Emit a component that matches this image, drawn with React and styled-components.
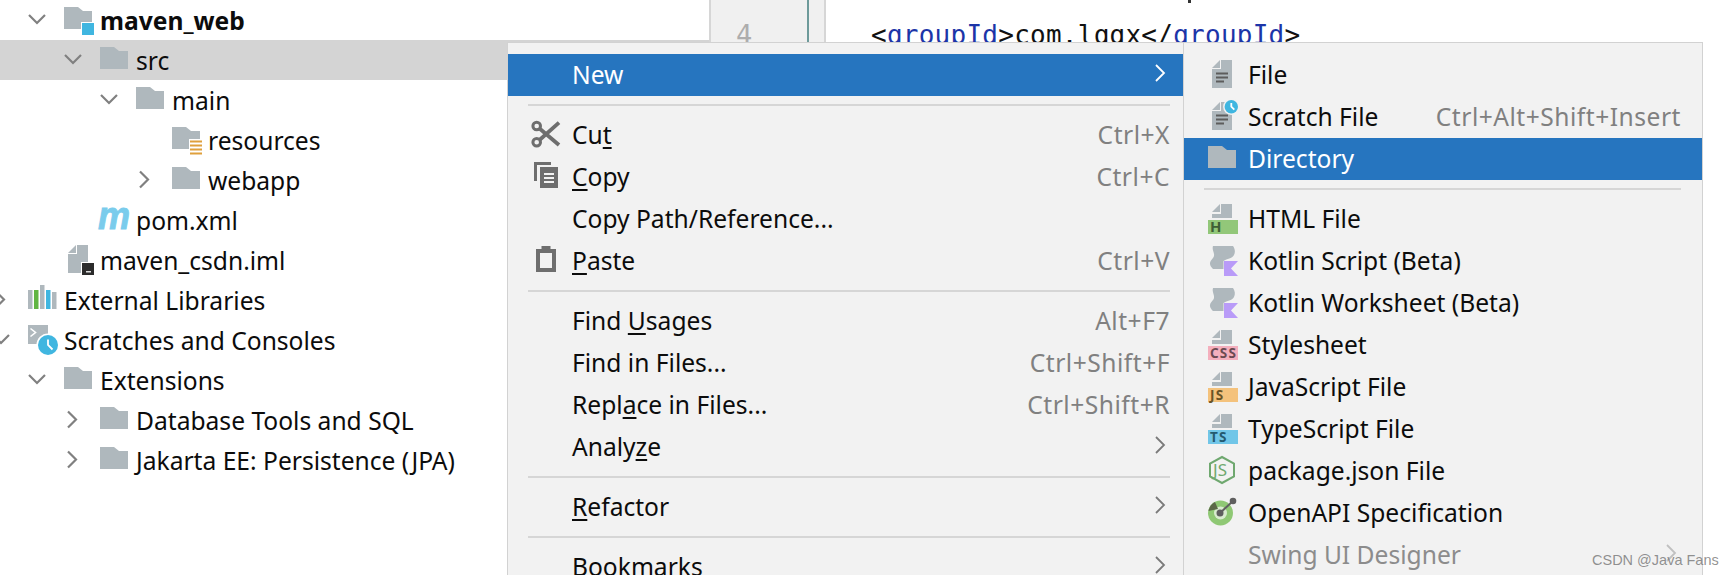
import React from 'react';
import styled, { createGlobalStyle } from 'styled-components';

const GRAY = '#afb8bd';
const UI_FONT = '"Noto Sans", "Open Sans", sans-serif';

const GlobalStyle = createGlobalStyle`
  html, body { margin: 0; padding: 0; background: #fff; }
  body { font-family: ${UI_FONT}; color: #0c0c0c; }
`;

const Page = styled.div`
  position: relative;
  display: flex;
  width: 1726px;
  height: 575px;
  overflow: hidden;
  background: #fff;
`;

/* project tree */
const Tree = styled.div`
  width: 709px;
  flex: none;
  overflow: hidden;
`;

const TreeRow = styled.div`
  display: flex;
  align-items: center;
  height: 40px;
  background: ${p => (p.$selected ? '#d4d4d4' : 'transparent')};
  font-size: 24.6px;
  font-weight: ${p => (p.$bold ? 700 : 400)};
  white-space: nowrap;
`;

const ChevronSlot = styled.div`
  width: 36px;
  height: 18px;
  flex: none;
  margin-left: ${p => p.$depth * 36 - 8}px;
`;

const IconSlot = styled.div`
  width: 36px;
  height: 30px;
  flex: none;
`;

const Svg = styled.svg`
  display: block;
  overflow: visible;
`;

/* editor behind the menu */
const Gutter = styled.div`
  position: relative;
  width: 117px;
  flex: none;
  box-sizing: border-box;
  background: #f0f0f0;
  border-left: 2px solid #d6d6d6;
  border-right: 2px solid #d6d6d6;
  padding: 18px 0 0 25px;
  font: 27px/34px "DejaVu Sans Mono", monospace;
  color: #adadad;
`;

const ChangeBar = styled.div`
  position: absolute;
  top: 0;
  bottom: 0;
  left: 96px;
  width: 2px;
  background: #6d9a9a;
`;

const Editor = styled.div`
  flex: 1;
  padding: 18px 0 0 45px;
  font: 26px/34px "DejaVu Sans Mono", monospace;
  letter-spacing: 0.25px;
  color: #111;
  white-space: pre;
`;

const Tag = styled.span`
  color: #1c35a8;
`;

const StrayTick = styled.div`
  position: absolute;
  top: 0;
  left: 1188px;
  width: 3px;
  height: 3px;
  background: #333;
`;

/* popup menus */
const Menu = styled.div`
  --start: ${p => p.$start}px;
  --end: ${p => p.$end}px;
  --slot: ${p => p.$slot}px;
  position: absolute;
  top: 42px;
  left: ${p => p.$left}px;
  width: ${p => p.$width}px;
  height: 560px;
  box-sizing: border-box;
  padding-top: 11px;
  background: #f2f2f2;
  border: 1px solid #d2d2d2;
  font-size: 24.6px;
`;

const Item = styled.div`
  display: flex;
  align-items: center;
  box-sizing: border-box;
  height: 42px;
  padding: 0 var(--end) 1px var(--start);
  background: ${p => (p.$active ? '#2675bf' : 'transparent')};
  color: ${p => (p.$active ? '#fff' : p.$disabled ? '#8c8c8c' : '#0c0c0c')};
  white-space: nowrap;
`;

const ItemIcon = styled.div`
  width: var(--slot);
  height: 30px;
  margin-top: 1px;
  flex: none;
`;

const Label = styled.span`
  flex: 1;
`;

const Mnemonic = styled.span`
  text-decoration: underline;
  text-decoration-thickness: 2px;
  text-underline-offset: 3px;
`;

const Shortcut = styled.span`
  color: #808080;
  letter-spacing: 0.5px;
`;

const ArrowBox = styled.span`
  display: block;
  margin: 0 4px 3px 0;
  color: ${p => (p.$active ? '#fff' : p.$disabled ? '#c0c0c0' : '#7a7a7a')};
`;

const Separator = styled.div`
  height: 2px;
  margin: 8px var(--end) 8px 20px;
  background: #d6d6d6;
`;

const Watermark = styled.div`
  position: absolute;
  left: 1592px;
  top: 550px;
  font: 14.5px/20px "Liberation Sans", sans-serif;
  color: rgba(110, 110, 110, 0.75);
  white-space: nowrap;
`;

/* small drawings */
const Chevron = ({ open }) => (
  <Svg width="18" height="18" viewBox="0 0 18 18" fill="none" stroke="#808080" strokeWidth="2.2">
    <path d={open ? 'M1 4l8 8 8-8' : 'M4 0.5l8 8-8 8'} />
  </Svg>
);

const Arrow = () => (
  <Svg width="12" height="18" viewBox="0 0 12 18" fill="none" stroke="currentColor" strokeWidth="1.8">
    <path d="M2 1l8 8-8 8" />
  </Svg>
);

const Icon = ({ children }) => (
  <Svg width="30" height="30" viewBox="0 0 30 30">{children}</Svg>
);

const FOLDER = 'M0 2h14l5 4h9v18H0z';
const FOLDER_CUT = 'M0 2h14l5 4h9v11H17v7H0z';
const FILE_TOP = 'M9 0h11v14H0v-4h9z';
const FILE_FULL = 'M9 0h11v28H0V9h9z';

const FileLines = () => (
  <path d="M8 12.5h12v2H8zM8 16.5h12v2H8zM8 20.5h8v2H8z" fill="#5d5d5d" />
);

const Badge = ({ color, ink, text, size = 13.5 }) => (
  <>
    <path d={FILE_TOP} fill={GRAY} transform="translate(4 0)" />
    <path d="M4 8l8-8v8z" fill={GRAY} />
    <rect x="0" y="16" width="30" height="14" fill={color} />
    <text x="2" y="28" fontFamily="'Noto Sans', sans-serif" fontWeight="700" fontSize={size} letterSpacing="1.2" fill={ink}>
      {text}
    </text>
  </>
);

const KotlinIcon = () => (
  <Icon>
    <path d="M5 0H25C27 3 27.500 6 26 9C24 13 19 12.500 15.500 15V23H5C2 20 1 17.500 3 14.500C5 12 6.500 11 6 8C5.500 5 4 3 5 0z" fill={GRAY} />
    <path d="M16 15h14l-7 7.500 7 7.500H16z" fill="#b99bf8" />
  </Icon>
);

const ClockBadge = ({ cx, cy, r, ring }) => (
  <>
    <circle cx={cx} cy={cy} r={r + 1.5} fill={ring} />
    <circle cx={cx} cy={cy} r={r} fill="#40b6e0" />
    <path d={`M${cx} ${cy - r * 0.55}V${cy}l${r * 0.45} ${r * 0.45}`} fill="none" stroke="#fff" strokeWidth="1.800" />
  </>
);

const icons = {
  folder: <Icon><path d={FOLDER} fill={GRAY} /></Icon>,
  module: (
    <Icon>
      <path d={FOLDER_CUT} fill={GRAY} />
      <rect x="18" y="18" width="12" height="12" fill="#40b6e0" />
    </Icon>
  ),
  resources: (
    <Icon>
      <path d="M0 2h14l5 4h9v8H17v10H0z" fill={GRAY} />
      <path d="M18 15.500h12v2H18zM18 19.500h12v2H18zM18 23.500h12v2H18zM18 27.500h12v2H18z" fill="#dfa03c" />
    </Icon>
  ),
  maven: (
    <Icon>
      <text x="-2" y="24" fontFamily="'Liberation Sans', sans-serif" fontStyle="italic" fontWeight="700" fontSize="38" textLength="32" lengthAdjust="spacingAndGlyphs" fill="#7accec" stroke="#7accec" strokeWidth="0.9">
        m
      </text>
    </Icon>
  ),
  iml: (
    <Icon>
      <path d="M4 8l8-8v8z" fill={GRAY} />
      <path d="M13 0h11v17H17v11H4V9h9z" fill={GRAY} />
      <rect x="18" y="18" width="12" height="12" fill="#2b2b2b" />
      <rect x="22" y="26" width="5" height="1.500" fill="#ddd" />
    </Icon>
  ),
  libraries: (
    <Icon>
      <rect x="0" y="5" width="4.500" height="19" fill={GRAY} />
      <rect x="6" y="5" width="4.500" height="19" fill="#62b543" />
      <rect x="12" y="0" width="4.500" height="24" fill={GRAY} />
      <rect x="18" y="5" width="4.500" height="19" fill="#40b6e0" />
      <rect x="24" y="7" width="4.500" height="17" fill={GRAY} />
    </Icon>
  ),
  scratches: (
    <Icon>
      <rect x="0" y="0" width="20" height="19" fill={GRAY} />
      <path d="M2.500 3.500l5 4-5 4" fill="none" stroke="#fff" strokeWidth="1.600" />
      <ClockBadge cx={20} cy={20} r={10} ring="#fff" />
    </Icon>
  ),
  scissors: (
    <Icon>
      <g fill="none" stroke="#6e6e6e">
        <circle cx="5.700" cy="6" r="3.800" strokeWidth="3" />
        <circle cx="5.700" cy="22.300" r="3.800" strokeWidth="3" />
        <path d="M8.500 8.500L28 25M8.500 20L28 2.700" strokeWidth="3.800" />
      </g>
    </Icon>
  ),
  copy: (
    <Icon>
      <path d="M3 0h17v3H6v16H3z" fill="#6e6e6e" />
      <path d="M9 5h18v21H9z" fill="#6e6e6e" />
      <path d="M13 11h10v2H13zM13 15h10v2H13zM13 19h10v2H13z" fill="#f2f2f2" />
    </Icon>
  ),
  paste: (
    <Icon>
      <path d="M5 3h5.500V0h9v3H25v23H5zM9 7v15h12V7z" fill="#6e6e6e" fillRule="evenodd" />
    </Icon>
  ),
  file: (
    <Icon>
      <path d="M4 8l8-8v8z" fill={GRAY} />
      <path d={FILE_FULL} fill={GRAY} transform="translate(4 0)" />
      <FileLines />
    </Icon>
  ),
  scratchFile: (
    <Icon>
      <path d="M4 8l8-8v8z" fill={GRAY} />
      <path d={FILE_FULL} fill={GRAY} transform="translate(4 0)" />
      <FileLines />
      <ClockBadge cx={23.300} cy={4.700} r={6.700} ring="#f2f2f2" />
    </Icon>
  ),
  html: <Icon><Badge color="#92c779" ink="#3e5f36" text="H" size={15} /></Icon>,
  kotlin: <KotlinIcon />,
  css: <Icon><Badge color="#f4afbd" ink="#6b4a52" text="CSS" /></Icon>,
  js: <Icon><Badge color="#f4c27c" ink="#6a5426" text="JS" /></Icon>,
  ts: <Icon><Badge color="#71c6e8" ink="#245a70" text="TS" /></Icon>,
  packageJson: (
    <Icon>
      <path d="M14 1l12 6.500v13L14 27 2 20.500v-13z" fill="none" stroke="#6fa86f" strokeWidth="2" />
      <text x="5" y="20" fontFamily="'Noto Sans', sans-serif" fontSize="17" fill="#6fa86f">JS</text>
    </Icon>
  ),
  openApi: (
    <Icon>
      <circle cx="12.500" cy="15" r="12.500" fill="#8fc874" />
      <circle cx="12.500" cy="15" r="6.500" fill="#d9ebcf" />
      <path d="M0.500 13A12.500 12.500 0 0 1 7 4l3 7z" fill="#5c6848" />
      <path d="M12 15L25 3" stroke="#5f5f5f" strokeWidth="2" />
      <circle cx="12" cy="15" r="3.500" fill="#5f5f5f" />
      <circle cx="25" cy="3" r="3.300" fill="#5f5f5f" />
    </Icon>
  ),
};

const treeRows = [
  { depth: 1, open: true, icon: 'module', label: 'maven_web', bold: true },
  { depth: 2, open: true, icon: 'folder', label: 'src', selected: true },
  { depth: 3, open: true, icon: 'folder', label: 'main' },
  { depth: 4, icon: 'resources', label: 'resources' },
  { depth: 4, open: false, icon: 'folder', label: 'webapp' },
  { depth: 2, icon: 'maven', label: 'pom.xml' },
  { depth: 1, icon: 'iml', label: 'maven_csdn.iml' },
  { depth: 0, open: false, icon: 'libraries', label: 'External Libraries' },
  { depth: 0, open: true, icon: 'scratches', label: 'Scratches and Consoles' },
  { depth: 1, open: true, icon: 'folder', label: 'Extensions' },
  { depth: 2, open: false, icon: 'folder', label: 'Database Tools and SQL' },
  { depth: 2, open: false, icon: 'folder', label: 'Jakarta EE: Persistence (JPA)' },
];

const mainItems = [
  { label: 'New', active: true, arrow: true },
  'sep',
  { icon: 'scissors', label: <>Cu<Mnemonic>t</Mnemonic></>, shortcut: 'Ctrl+X' },
  { icon: 'copy', label: <><Mnemonic>C</Mnemonic>opy</>, shortcut: 'Ctrl+C' },
  { label: 'Copy Path/Reference...' },
  { icon: 'paste', label: <><Mnemonic>P</Mnemonic>aste</>, shortcut: 'Ctrl+V' },
  'sep',
  { label: <>Find <Mnemonic>U</Mnemonic>sages</>, shortcut: 'Alt+F7' },
  { label: 'Find in Files...', shortcut: 'Ctrl+Shift+F' },
  { label: <>Repl<Mnemonic>a</Mnemonic>ce in Files...</>, shortcut: 'Ctrl+Shift+R' },
  { label: <>Analy<Mnemonic>z</Mnemonic>e</>, arrow: true },
  'sep',
  { label: <><Mnemonic>R</Mnemonic>efactor</>, arrow: true },
  'sep',
  { label: 'Bookmarks', arrow: true },
];

const newItems = [
  { icon: 'file', label: 'File' },
  { icon: 'scratchFile', label: 'Scratch File', shortcut: 'Ctrl+Alt+Shift+Insert' },
  { icon: 'folder', label: 'Directory', active: true },
  'sep',
  { icon: 'html', label: 'HTML File' },
  { icon: 'kotlin', label: 'Kotlin Script (Beta)' },
  { icon: 'kotlin', label: 'Kotlin Worksheet (Beta)' },
  { icon: 'css', label: 'Stylesheet' },
  { icon: 'js', label: 'JavaScript File' },
  { icon: 'ts', label: 'TypeScript File' },
  { icon: 'packageJson', label: 'package.json File' },
  { icon: 'openApi', label: 'OpenAPI Specification' },
  { label: 'Swing UI Designer', disabled: true, arrow: true },
];

const MenuItems = ({ items }) =>
  items.map((item, index) =>
    item === 'sep' ? (
      <Separator key={index} />
    ) : (
      <Item key={index} $active={item.active} $disabled={item.disabled}>
        <ItemIcon>{item.icon && icons[item.icon]}</ItemIcon>
        <Label>{item.label}</Label>
        {item.shortcut && <Shortcut>{item.shortcut}</Shortcut>}
        {item.arrow && (
          <ArrowBox $active={item.active} $disabled={item.disabled}>
            <Arrow />
          </ArrowBox>
        )}
      </Item>
    )
  );

const App = () => (
  <Page>
    <GlobalStyle />
    <Tree>
      {treeRows.map(row => (
        <TreeRow key={row.label} $selected={row.selected} $bold={row.bold}>
          <ChevronSlot $depth={row.depth}>{row.open !== undefined && <Chevron open={row.open} />}</ChevronSlot>
          <IconSlot>{icons[row.icon]}</IconSlot>
          {row.label}
        </TreeRow>
      ))}
    </Tree>
    <Gutter>
      4
      <ChangeBar />
    </Gutter>
    <Editor>
      &lt;<Tag>groupId</Tag>&gt;com.lqgx&lt;/<Tag>groupId</Tag>&gt;
    </Editor>
    <StrayTick />
    <Menu $left={507} $width={677} $start={23} $end={13} $slot={41}>
      <MenuItems items={mainItems} />
    </Menu>
    <Menu $left={1183} $width={520} $start={24} $end={21} $slot={40}>
      <MenuItems items={newItems} />
    </Menu>
    <Watermark>CSDN @Java Fans</Watermark>
  </Page>
);

export default App;
